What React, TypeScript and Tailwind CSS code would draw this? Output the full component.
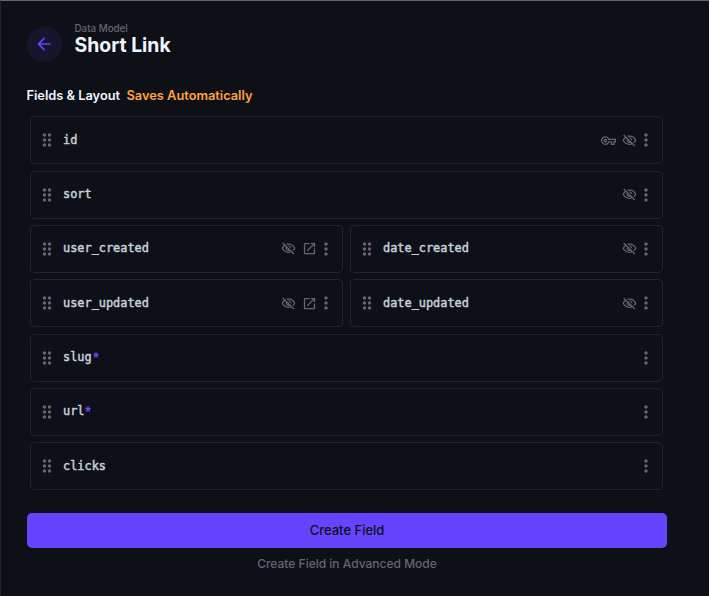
import type { ReactNode } from "react";
import {
  MdArrowBack,
  MdDragIndicator,
  MdMoreVert,
  MdOpenInNew,
  MdOutlineVisibilityOff,
  MdOutlineVpnKey,
} from "react-icons/md";

type FieldProps = {
  name: string;
  primary?: boolean;
  hidden?: boolean;
  relation?: boolean;
  required?: boolean;
  full?: boolean;
};

const fields: FieldProps[] = [
  { name: "id", primary: true, hidden: true, full: true },
  { name: "sort", hidden: true, full: true },
  { name: "user_created", hidden: true, relation: true },
  { name: "date_created", hidden: true },
  { name: "user_updated", hidden: true, relation: true },
  { name: "date_updated", hidden: true },
  { name: "slug", required: true, full: true },
  { name: "url", required: true, full: true },
  { name: "clicks", full: true },
];

function Slot({ children }: { children: ReactNode }) {
  return <span className="mr-[4.5px] flex size-4 items-center justify-center">{children}</span>;
}

function Field({ name, primary, hidden, relation, required, full }: FieldProps) {
  return (
    <div
      className={`flex h-12 items-center rounded-[5px] border border-[#21262e] pl-[6px] pr-[5.6px] ${full ? "col-span-2" : ""}`}
    >
      <MdDragIndicator className="size-5 text-[#666672]" />
      <div className="-mt-px ml-[6px] flex flex-1 font-['DejaVu_Sans_Mono',monospace] text-[11.9px] leading-4 text-[#c9d1d9] [-webkit-text-stroke:0.45px_#c9d1d9]">
        {name}
        {required && (
          <svg viewBox="0 0 6 6" className="ml-px mt-[3px] size-[6px] fill-[#6644ff] stroke-[#6644ff] stroke-[0.5]">
            <path d="M3 0l.8 2 2.2.1-1.7 1.4.6 2.2L3 4.5 1.1 5.7l.6-2.2L0 2.1 2.2 2z" />
          </svg>
        )}
      </div>
      <div className="flex items-center text-[#666672]">
        {primary && <Slot><MdOutlineVpnKey className="size-[15px]" /></Slot>}
        {hidden && <Slot><MdOutlineVisibilityOff className="size-[15px]" /></Slot>}
        {relation && <Slot><MdOpenInNew className="size-[15px]" /></Slot>}
        <MdMoreVert className="-ml-[5.5px] size-5" />
      </div>
    </div>
  );
}

export default function App() {
  return (
    <main className="h-[596px] w-[709px] border-l border-t border-l-[#21262e] border-t-[#666666] bg-[#0d1117] pl-[26px] pr-[42px] pt-[21px] font-['Inter',sans-serif]">
      <header className="flex h-[41px] items-end">
        <button className="mb-px flex size-[35px] items-center justify-center rounded-full bg-[#16152e] pb-px pr-px text-[#6644ff]">
          <MdArrowBack className="size-5" />
        </button>
        <div className="ml-[12.5px] h-[41px]">
          <div className="text-[9.8px] font-medium leading-[13px] text-[#666672]">Data Model</div>
          <h1 className="text-[19.4px] font-bold leading-[20px] text-[#f0f6fc]">Short Link</h1>
        </div>
      </header>
      <h2 className="-ml-[0.5px] mt-[24px] flex gap-[6.5px] text-[12.8px] font-semibold leading-[18px] text-[#f0f6fc]">
        <span>Fields &amp; Layout</span>
        <span className="text-[#ffa439]">Saves Automatically</span>
      </h2>
      <section className="ml-[3px] mr-[4px] mt-[11.4px] grid grid-cols-2 gap-x-[7px] gap-y-[6.3px]">
        {fields.map((field) => (
          <Field key={field.name} {...field} />
        ))}
      </section>
      <button className="mt-[22.8px] block h-[35px] w-full rounded-[5px] bg-[#6644ff] text-[13px] font-medium text-[#0d1117]">
        Create Field
      </button>
      <button className="mt-[8px] block w-full text-[12px] font-medium leading-4 text-[#666672]">
        Create Field in Advanced Mode
      </button>
    </main>
  );
}
